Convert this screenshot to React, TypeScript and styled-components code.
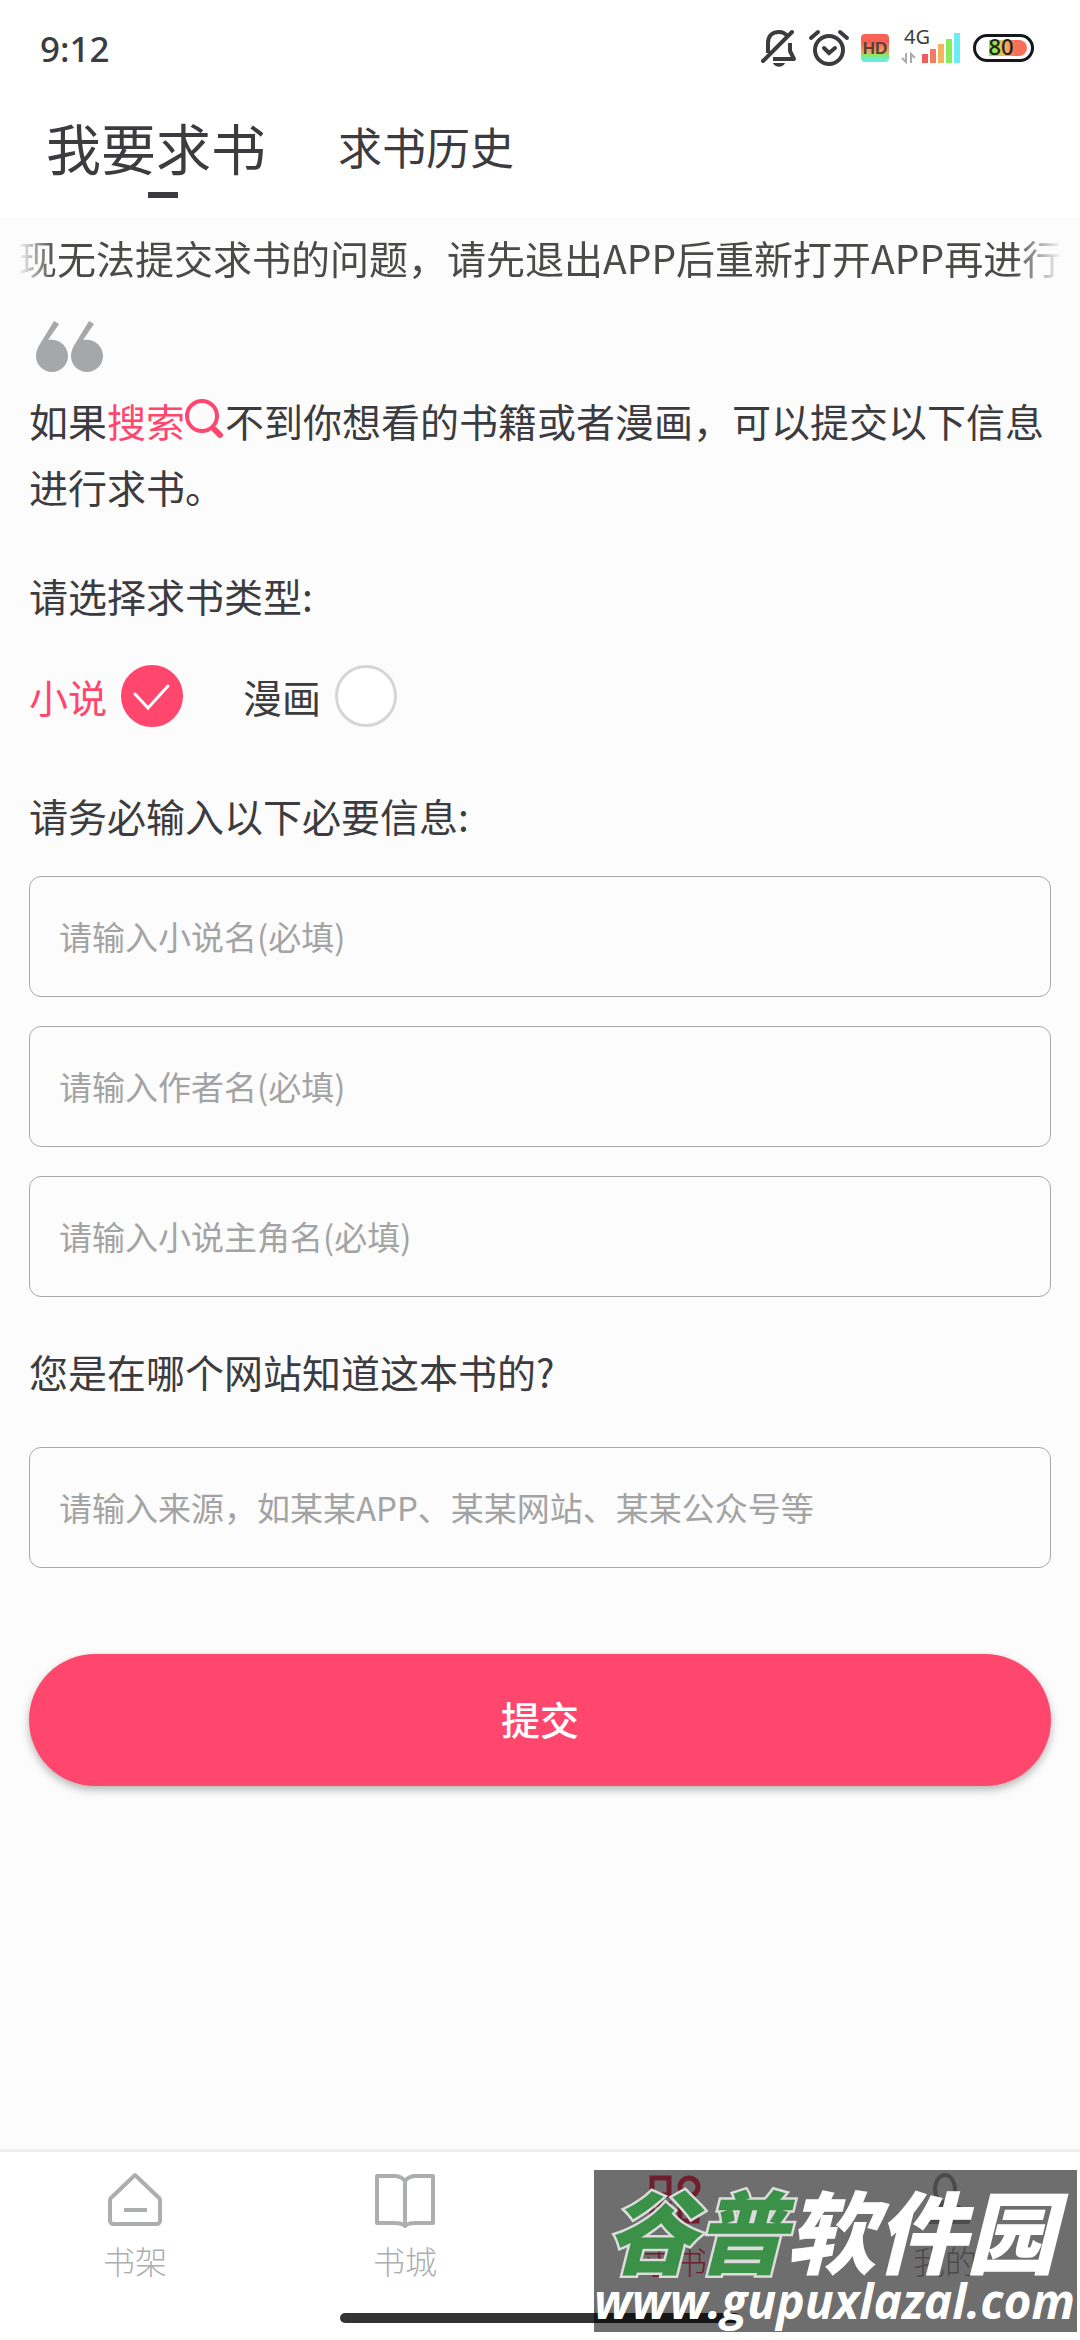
import { useState } from 'react';
import styled, { createGlobalStyle, css } from 'styled-components';

const PINK = '#ff476e';
const TEXT = '#3c3c40';

const GlobalStyle = createGlobalStyle`
  * {
    box-sizing: border-box;
  }

  body {
    margin: 0;
    background: #fcfcfc;
    color: ${TEXT};
    font-family: 'Noto Sans CJK SC', sans-serif;
    font-size: 39px;
  }

  button,
  input {
    font-family: inherit;
  }
`;

const Page = styled.div`
  position: relative;
  display: flex;
  flex-direction: column;
  min-height: 100vh;
  overflow: hidden;
`;

const Header = styled.header`
  height: 218px;
  background: #fff;
`;

const StatusBar = styled.div`
  display: flex;
  align-items: center;
  justify-content: space-between;
  height: 96px;
  padding: 0 46px 0 40px;
`;

const Clock = styled.span`
  font-family: 'Noto Sans', sans-serif;
  font-size: 35px;
  font-weight: 500;
`;

const StatusIcons = styled.div`
  display: flex;
  align-items: center;
  gap: 12px;

  svg {
    display: block;
    overflow: visible;
  }
`;

const Tabs = styled.nav`
  display: flex;
  align-items: flex-start;
  gap: 72px;
  padding: 0 46px;
`;

const Tab = styled.button<{ $active?: boolean }>`
  display: flex;
  flex-direction: column;
  align-items: center;
  padding: 0;
  border: 0;
  background: none;
  color: ${TEXT};
  font-size: ${(props) => (props.$active ? '55px' : '44px')};
  line-height: 100px;

  ${(props) =>
    props.$active &&
    css`
      &::after {
        content: '';
        width: 30px;
        height: 6px;
        margin: -4px 0 0 14px;
        background: ${TEXT};
      }
    `}
`;

const Notice = styled.div`
  margin: 0 18px;
  overflow: hidden;
  white-space: nowrap;
  line-height: 78px;
  color: #4a4a48;
  mask-image: linear-gradient(to right, transparent, #000 36px, #000 calc(100% - 48px), transparent);
`;

const Main = styled.main`
  display: flex;
  flex-direction: column;
  padding: 0 29px;
`;

const QuoteIcon = styled.svg`
  display: block;
  margin: 25px 7px 0;
`;

const Intro = styled.p`
  margin: 15px 0 0;
  line-height: 66px;
`;

const SearchLink = styled.a`
  color: ${PINK};
  text-decoration: none;

  svg {
    vertical-align: -3px;
  }
`;

const Question = styled.h2`
  margin: 0;
  font-size: 39px;
  font-weight: 400;
  line-height: 60px;
`;

const TypeGroup = styled.fieldset`
  display: flex;
  gap: 60px;
  margin: 46px 0 58px;
  padding: 0;
  border: 0;
`;

const TypeLegend = styled.legend`
  margin-bottom: 40px;
  padding: 0;
  line-height: 60px;
`;

const TypeOption = styled.label<{ $checked: boolean }>`
  display: flex;
  align-items: center;
  gap: 14px;
  color: ${(props) => (props.$checked ? PINK : TEXT)};
`;

const RadioBox = styled.span`
  display: grid;

  > * {
    grid-area: 1 / 1;
    margin: 0;
  }
`;

const Radio = styled.input`
  appearance: none;
  width: 62px;
  height: 62px;
  border: 3px solid #d6d6d6;
  border-radius: 50%;
  background: #fff;

  &:checked {
    border-color: ${PINK};
    background: ${PINK};
  }
`;

const Fields = styled.div`
  display: flex;
  flex-direction: column;
  gap: 29px;
  margin: 31px 0 44px;
`;

const TextField = styled.input`
  width: 100%;
  height: 121px;
  padding: 0 29px 2px;
  border: 1px solid #a9a9a9;
  border-radius: 12px;
  background: transparent;
  color: ${TEXT};
  font-size: 33px;

  &::placeholder {
    color: #a3a3a3;
    opacity: 1;
  }
`;

const SourceField = styled(TextField)`
  margin-top: 46px;
`;

const SubmitButton = styled.button`
  height: 132px;
  margin-top: 86px;
  padding: 0 0 4px;
  border: 0;
  border-radius: 66px;
  background: ${PINK};
  box-shadow: 0 4px 8px rgba(0, 0, 0, 0.28);
  color: #fff;
  font-size: 39px;
  font-weight: 500;
`;

const BottomNav = styled.nav`
  display: flex;
  height: 191px;
  margin-top: auto;
  border-top: 3px solid #efefef;
  background: #fff;
`;

const NavItem = styled.a<{ $active?: boolean }>`
  flex: 1;
  display: flex;
  flex-direction: column;
  align-items: center;
  padding-top: 18px;
  color: ${(props) => (props.$active ? PINK : '#adaeb0')};
  font-size: 32px;
  font-weight: 300;
  line-height: 60px;
  text-decoration: none;
`;

const HomeIndicator = styled.div`
  position: absolute;
  bottom: 17px;
  left: 50%;
  width: 400px;
  height: 10px;
  margin-left: -200px;
  border-radius: 5px;
  background: #333;
`;

const Watermark = styled.div`
  position: absolute;
  right: 3px;
  bottom: 8px;
  width: 483px;
  height: 162px;
  background: rgba(0, 0, 0, 0.57);
  color: #fff;
  font-style: italic;
  white-space: nowrap;
`;

const WatermarkName = styled.div`
  padding-left: 12px;
  font-size: 90px;
  font-weight: 900;
  line-height: 116px;
`;

const WatermarkGreen = styled.span`
  color: #3c9149;
  -webkit-text-stroke: 5px #dcdcdc;
  paint-order: stroke fill;
`;

const WatermarkUrl = styled.div`
  font-family: 'Open Sans', sans-serif;
  font-size: 48px;
  font-weight: 700;
  line-height: 50px;
  margin-top: -10px;
`;

const MuteIcon = () => (
  <svg width="36" height="40" viewBox="0 0 36 40" fill="none" stroke="#3c3c3e" strokeWidth="4">
    <path d="M7 25V15C7 7 12 4 18 4c4 0 7 2 9 5M29 15v8l4 8H12" strokeLinejoin="round" />
    <path d="M2 33 31 4" strokeLinecap="round" />
    <path d="M12 35h12c-2 5-10 5-12 0z" fill="#3c3c3e" stroke="none" />
  </svg>
);

const AlarmIcon = () => (
  <svg width="40" height="38" viewBox="0 0 40 38" fill="none" stroke="#3c3c3e" strokeWidth="4" strokeLinecap="round">
    <circle cx="20" cy="21" r="14" />
    <path d="m2 9 7-6M38 9l-7-6M15 19l5 5 6-5" />
  </svg>
);

const HdIcon = () => (
  <svg width="28" height="28" viewBox="0 0 28 28">
    <defs>
      <linearGradient id="hd" x1="0" y1="0" x2="0" y2="1">
        <stop offset="0.3" stopColor="#fa6155" />
        <stop offset="0.6" stopColor="#f89a5c" />
        <stop offset="0.76" stopColor="#7ef05a" />
        <stop offset="0.9" stopColor="#6ce9e2" />
      </linearGradient>
    </defs>
    <rect width="28" height="28" rx="4" fill="url(#hd)" />
    <text x="14" y="20" textAnchor="middle" fontFamily="Liberation Sans, sans-serif" fontWeight="700" fontSize="17" fill="#5a3f35">
      HD
    </text>
  </svg>
);

const SignalIcon = () => (
  <svg width="60" height="38" viewBox="0 0 60 38">
    <text x="3" y="15" fontFamily="Noto Sans, sans-serif" fontSize="20" fill="#3c3c3e">
      4G
    </text>
    <path d="M5 24v9l-4-4M10 34v-9l4 4" fill="none" stroke="#aaa" strokeWidth="2" />
    <rect x="21" y="25" width="6" height="9" fill="#ee5d5d" />
    <rect x="29" y="20" width="6" height="14" fill="#f27c5e" />
    <rect x="37" y="15" width="6" height="19" fill="#f6b35f" />
    <rect x="45" y="10" width="6" height="24" fill="#86ec5a" />
    <rect x="53" y="4" width="6" height="30" fill="#68eef4" />
  </svg>
);

const BatteryIcon = () => (
  <svg width="61" height="28" viewBox="0 0 61 28">
    <defs>
      <linearGradient id="battery">
        <stop offset="0.1" stopColor="#7ef04c" />
        <stop offset="0.4" stopColor="#f7b65f" />
        <stop offset="0.7" stopColor="#f96e58" />
      </linearGradient>
    </defs>
    <rect x="1.5" y="1.5" width="58" height="25" rx="12.5" fill="#fff" stroke="#16171c" strokeWidth="3" />
    <path d="M16 6h30a8 8 0 0 1 0 16H16z" fill="url(#battery)" />
    <text x="28" y="21" textAnchor="middle" fontFamily="Noto Sans, sans-serif" fontWeight="500" fontSize="22" fill="#222">
      80
    </text>
  </svg>
);

const SearchIcon = () => (
  <svg width="40" height="41" viewBox="0 0 40 41" fill="none" stroke={PINK} strokeWidth="4">
    <circle cx="17" cy="17" r="15" />
    <path d="m30 31 5 5" strokeWidth="6" strokeLinecap="round" />
  </svg>
);

const ShelfIcon = () => (
  <svg width="60" height="60" viewBox="0 0 60 60" fill="none" stroke="currentColor" strokeWidth="4">
    <path d="M30 5 53 27a4 4 0 0 1 2 3v21a4 4 0 0 1-3 3H8a4 4 0 0 1-3-3V30a4 4 0 0 1 2-3z" strokeLinejoin="round" />
    <path d="M19 40h23" />
  </svg>
);

const StoreIcon = () => (
  <svg width="62" height="60" viewBox="0 0 62 60" fill="none" stroke="currentColor" strokeWidth="4" strokeLinejoin="round">
    <path d="M31 11c-3-4-6-5-11-5H3v47h17c5 0 8 0 11 3 3-3 6-3 11-3h17V6H42c-5 0-8 1-11 5zM31 11v44" />
  </svg>
);

const RequestIcon = () => (
  <svg width="54" height="60" viewBox="0 0 54 60" fill="none" stroke="currentColor" strokeWidth="5">
    <path d="M4 8h17v17H4zM4 34h17v17H4zM32 34h17v17H32z" />
    <circle cx="41" cy="17" r="9" />
  </svg>
);

const MineIcon = () => (
  <svg width="54" height="60" viewBox="0 0 54 60" fill="none" stroke="currentColor" strokeWidth="4">
    <ellipse cx="27" cy="19" rx="10" ry="14" />
    <path d="M4 52c0-12 8-17 23-17s23 5 23 17z" strokeLinejoin="round" />
  </svg>
);

const bookTypes = ['小说', '漫画'];

const requiredFields = ['请输入小说名(必填)', '请输入作者名(必填)', '请输入小说主角名(必填)'];

const navItems = [
  { label: '书架', Icon: ShelfIcon },
  { label: '书城', Icon: StoreIcon },
  { label: '求书', Icon: RequestIcon, active: true },
  { label: '我的', Icon: MineIcon },
];

export default function App() {
  const [bookType, setBookType] = useState('小说');

  return (
    <Page>
      <GlobalStyle />
      <Header>
        <StatusBar>
          <Clock>9:12</Clock>
          <StatusIcons>
            <MuteIcon />
            <AlarmIcon />
            <HdIcon />
            <SignalIcon />
            <BatteryIcon />
          </StatusIcons>
        </StatusBar>
        <Tabs>
          <Tab type="button" $active>
            我要求书
          </Tab>
          <Tab type="button">求书历史</Tab>
        </Tabs>
      </Header>

      <Notice>现无法提交求书的问题，请先退出APP后重新打开APP再进行求书</Notice>

      <Main>
        <QuoteIcon width="68" height="51" viewBox="0 0 68 51" fill="#a5a7a9">
          <path id="mark" d="M18 0 23 3 12 19C23 17 32 25 32 35A16 16 0 0 1 0 35C0 30 2 26 4 23z" />
          <use href="#mark" x="35" />
        </QuoteIcon>
        <Intro>
          如果
          <SearchLink href="#search">
            搜索
            <SearchIcon />
          </SearchLink>
          不到你想看的书籍或者漫画，可以提交以下信息进行求书。
        </Intro>

        <TypeGroup>
          <TypeLegend>请选择求书类型:</TypeLegend>
          {bookTypes.map((type) => (
            <TypeOption key={type} $checked={bookType === type}>
              {type}
              <RadioBox>
                <Radio
                  type="radio"
                  name="bookType"
                  checked={bookType === type}
                  onChange={() => setBookType(type)}
                />
                {bookType === type && (
                  <svg width="62" height="62" viewBox="0 0 62 62" fill="none" stroke="#fff" strokeWidth="3" pointerEvents="none">
                    <path d="m14 29 13 14 20-22" strokeLinecap="round" />
                  </svg>
                )}
              </RadioBox>
            </TypeOption>
          ))}
        </TypeGroup>

        <Question>请务必输入以下必要信息:</Question>
        <Fields>
          {requiredFields.map((field) => (
            <TextField key={field} placeholder={field} aria-label={field} />
          ))}
        </Fields>

        <Question as="label" htmlFor="source">
          您是在哪个网站知道这本书的?
        </Question>
        <SourceField id="source" placeholder="请输入来源，如某某APP、某某网站、某某公众号等" />

        <SubmitButton type="button">提交</SubmitButton>
      </Main>

      <BottomNav>
        {navItems.map(({ label, Icon, active }) => (
          <NavItem key={label} href="#" $active={active}>
            <Icon />
            {label}
          </NavItem>
        ))}
      </BottomNav>
      <HomeIndicator />

      <Watermark>
        <WatermarkName>
          <WatermarkGreen>谷普</WatermarkGreen>软件园
        </WatermarkName>
        <WatermarkUrl>www.gupuxlazal.com</WatermarkUrl>
      </Watermark>
    </Page>
  );
}
